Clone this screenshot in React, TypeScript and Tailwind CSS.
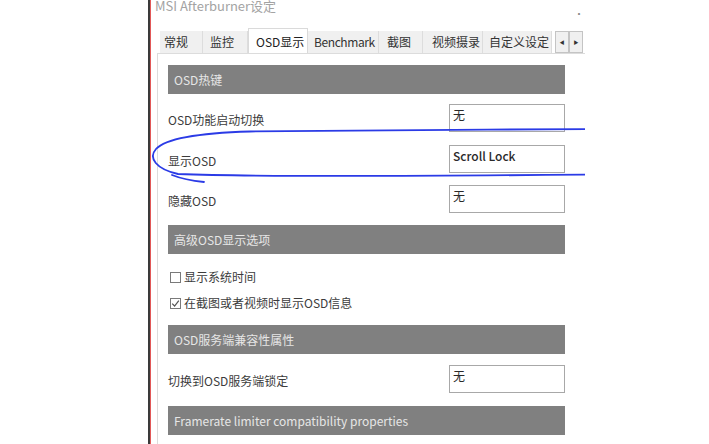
import React from "react";

const font = { fontFamily: '"Noto Sans CJK SC", "Noto Sans", sans-serif' };

function Header({ text }: { text: string }) {
  return (
    <div className="h-[29px] w-[397px] bg-[#808080] flex items-center pl-[6px] text-[12px] text-[#e6e6e6] leading-none">
      {text}
    </div>
  );
}

function FieldRow({ label, value, bold }: { label: string; value: string; bold?: boolean }) {
  return (
    <div className="w-[397px] h-[28px] flex items-center justify-between">
      <span className="text-[12px] text-[#3c3c3c] leading-none pt-[3px]">{label}</span>
      <div
        className={`w-[116px] h-[28px] border border-[#a8a8a8] bg-white pl-[3px] pt-[3px] text-[12px] leading-[14px] text-[#2a2a2a] ${
          bold ? "font-medium" : ""
        }`}
      >
        {value}
      </div>
    </div>
  );
}

function CheckRow({ label, checked }: { label: string; checked?: boolean }) {
  return (
    <div className="h-[18px] flex items-center pl-[2px] gap-[3px]">
      <div className="w-[11px] h-[11px] border border-[#7a7a7a] bg-white flex items-center justify-center">
        {checked && (
          <svg width="9" height="9" viewBox="0 0 9 9">
            <path d="M1.2 4.6 L3.6 7 L7.8 1.6" fill="none" stroke="#555" strokeWidth="1.2" />
          </svg>
        )}
      </div>
      <span className="text-[12px] text-[#3c3c3c] leading-none">{label}</span>
    </div>
  );
}

const tabs: { t: string; w: number; pl: number }[] = [
  { t: "常规", w: 43, pl: 4 },
  { t: "监控", w: 45, pl: 7 },
  { t: "OSD显示", w: 60, pl: 7 },
  { t: "Benchmark", w: 71, pl: 6 },
  { t: "截图", w: 44, pl: 8 },
  { t: "视频摄录", w: 60, pl: 9 },
  { t: "自定义设定", w: 69, pl: 6 },
];

export default function App() {
  return (
    <div className="w-[709px] h-[444px] bg-white relative overflow-hidden flex" style={font}>
      <div className="w-[148px] shrink-0" />
      <div className="w-[437px] h-full shrink-0 border-l-[2px] border-[#3a3a3a] relative overflow-hidden">
        <div className="h-full border-l-[1px] border-[#e25858] flex flex-col">
          {/* title bar */}
          <div className="h-[28px] flex items-start justify-between pl-[4px] pr-[1px] overflow-hidden">
            <span className="text-[13px] text-[#a3a3a3] leading-none mt-[-1px]">MSI Afterburner设定</span>
            <span className="text-[10px] text-[#888] leading-none mt-[9px]">·</span>
          </div>
          {/* tabs */}
          <div className="h-[25px] flex items-end pl-[9px]">
            <div className="h-[22px] flex items-stretch bg-[#f0f0f0]">
              {tabs.map((tab, i) =>
                i === 2 ? (
                  <div
                    key={tab.t}
                    className="bg-white border-x border-t border-[#dadada] mt-[-3px] h-[26px] flex items-center text-[12px] text-[#222] leading-none"
                    style={{ width: tab.w, paddingLeft: tab.pl }}
                  >
                    {tab.t}
                  </div>
                ) : (
                  <div
                    key={tab.t}
                    className={`border-r border-[#dddddd] flex items-center text-[12px] text-[#333] leading-none ${
                      i === 3 ? "tracking-[-0.4px]" : ""
                    }`}
                    style={{ width: tab.w, paddingLeft: tab.pl }}
                  >
                    {tab.t}
                  </div>
                )
              )}
            </div>
            <div className="w-[3px]" />
            <div className="h-[22px] flex bg-[#f0f0f0]">
              <div className="w-[14px] h-[22px] border border-[#c4c4c4] flex items-center justify-center text-[5px] text-[#333]">◀</div>
              <div className="w-[14px] h-[22px] border border-[#c4c4c4] flex items-center justify-center text-[5px] text-[#333]">▶</div>
            </div>
          </div>
          {/* tab page */}
          <div className="flex-1 ml-[6px] border-l border-t border-[#dcdcdc] bg-white pl-[10px] pt-[11px] flex flex-col">
            <Header text="OSD热键" />
            <div className="h-[10px]" />
            <FieldRow label="OSD功能启动切换" value="无" />
            <div className="h-[13px]" />
            <FieldRow label="显示OSD" value="Scroll Lock" bold />
            <div className="h-[12px]" />
            <FieldRow label="隐藏OSD" value="无" />
            <div className="h-[12px]" />
            <Header text="高级OSD显示选项" />
            <div className="flex flex-col pt-[14px] pb-[13px] gap-[8px]">
              <CheckRow label="显示系统时间" />
              <CheckRow label="在截图或者视频时显示OSD信息" checked />
            </div>
            <Header text="OSD服务端兼容性属性" />
            <div className="h-[11px]" />
            <FieldRow label="切换到OSD服务端锁定" value="无" />
            <div className="h-[13px]" />
            <Header text="Framerate limiter compatibility properties" />
          </div>
        </div>
      </div>
      {/* hand-drawn annotation */}
      <svg className="absolute left-0 top-0 pointer-events-none" width="709" height="444" viewBox="0 0 709 444">
        <defs>
          <clipPath id="c">
            <rect x="0" y="0" width="585" height="444" />
          </clipPath>
        </defs>
        <g clipPath="url(#c)" fill="none" stroke="#2b3be6" strokeWidth="1.8" strokeLinecap="round">
          <path d="M 590 129 C 470 130, 320 130, 250 131.5 C 200 133, 166 138, 156 149 C 148 158, 156 169, 178 174 C 260 177, 440 176, 590 174.5" />
          <path d="M 172 175 C 182 179, 194 181, 204 182" />
        </g>
      </svg>
    </div>
  );
}
